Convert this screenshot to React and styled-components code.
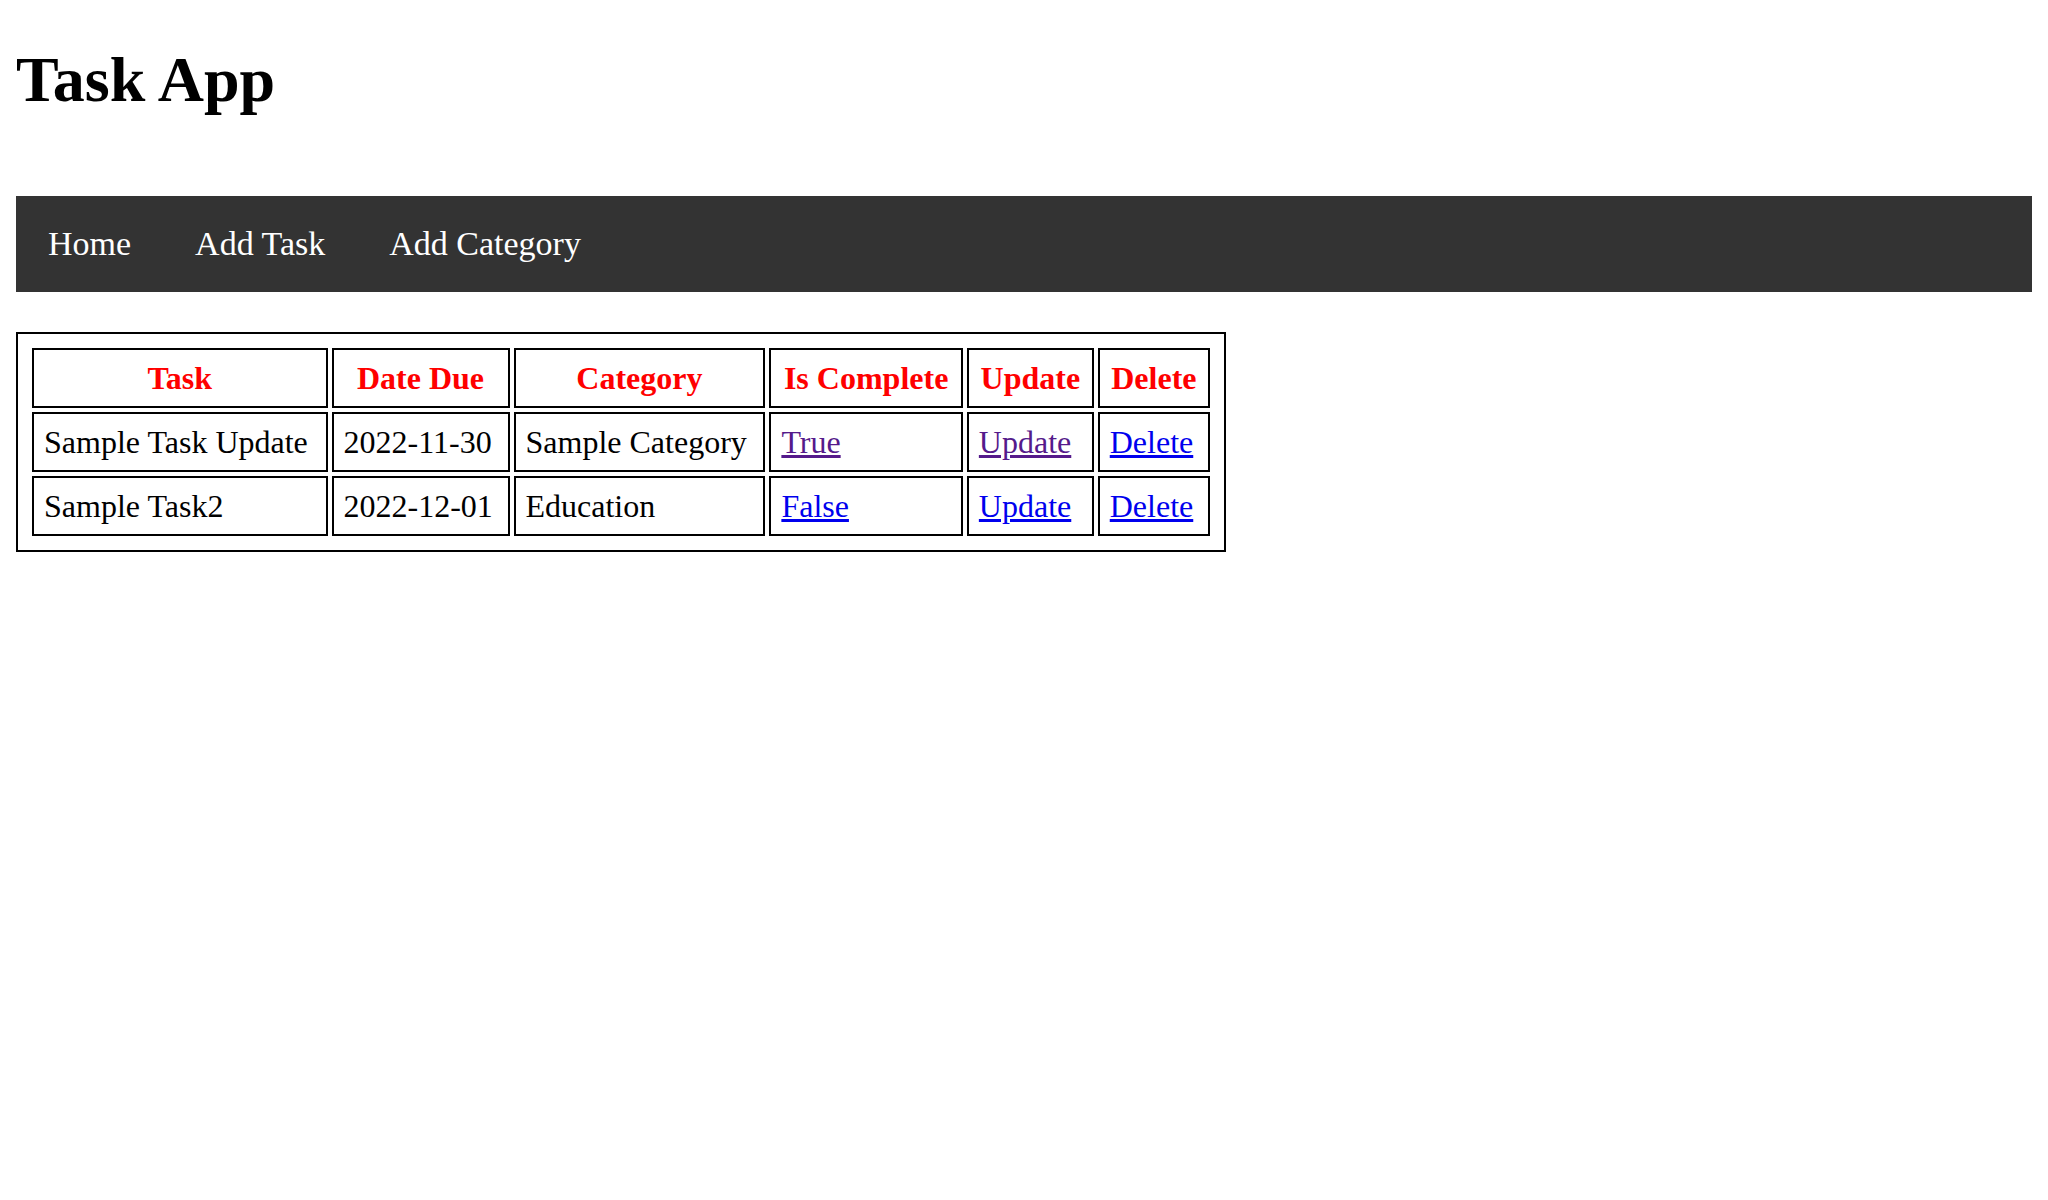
import React from "react";
import styled, { createGlobalStyle } from "styled-components";

const GlobalStyle = createGlobalStyle`
    html, body {
        background: #FFFFFF;
    }

    body {
        margin: 16px;
        font-family: "Liberation Serif", "Times New Roman", serif;
        font-size: 32px;
        color: #000000;
    }
`;

export default function App() {

    const links = ["Home", "Add Task", "Add Category"];

    const headers = ["Task", "Date Due", "Category", "Is Complete", "Update", "Delete"];

    const tasks = [
        { name: "Sample Task Update", due: "2022-11-30", category: "Sample Category", complete: "True", visited: true },
        { name: "Sample Task2", due: "2022-12-01", category: "Education", complete: "False", visited: false }
    ];

    function RenderTasks() {
        return tasks.map(({ name, due, category, complete, visited }, index) =>
            <tr key={index}>
                <Cell>{name}</Cell>
                <Cell>{due}</Cell>
                <Cell>{category}</Cell>
                <Cell><TableLink href="#" $visited={visited}>{complete}</TableLink></Cell>
                <Cell><TableLink href="#" $visited={visited}>Update</TableLink></Cell>
                <Cell><TableLink href="#">Delete</TableLink></Cell>
            </tr>
        )
    };

    return (
        <>
            <GlobalStyle />
            <Title>Task App</Title>

            <NavBar>
                {links.map((label) =>
                    <NavItem key={label}>
                        <NavLink href="#">{label}</NavLink>
                    </NavItem>
                )}
            </NavBar>

            <TaskTable>
                <thead>
                    <tr>
                        {headers.map((label) => <HeadCell key={label}>{label}</HeadCell>)}
                    </tr>
                </thead>
                <tbody>
                    <RenderTasks />
                </tbody>
            </TaskTable>
        </>
    )
};

// ------------------------------>>

const Title = styled.h1`

    margin: 26.88px 0 0;
    font-size: 64px;
    font-weight: 700;
`;

const NavBar = styled.ul`

    display: flex;
    margin: 79.5px 0 40px;
    padding: 0;
    list-style: none;
    background-color: #333333;
`;

const NavItem = styled.li`

    display: block;
`;

const NavLink = styled.a`

    display: block;
    padding: 29px 32px;
    font-size: 34px;
    color: #FFFFFF;
    text-align: center;
    text-decoration: none;
`;

// ------------------------------>>

const TaskTable = styled.table`

    width: 1210px;
    border: 2px solid #000000;
    border-spacing: 4px;
    padding: 10px;
`;

const HeadCell = styled.th`

    border: 2px solid #000000;
    padding: 9.5px 10px;
    color: #FF0000;
    font-weight: 700;
    text-align: center;
`;

const Cell = styled.td`

    border: 2px solid #000000;
    padding: 9.5px 10px;
    text-align: left;
`;

const TableLink = styled.a`

    color: ${props => props.$visited ? "#551A8B" : "#0000EE"};
    text-decoration: underline;
`;
